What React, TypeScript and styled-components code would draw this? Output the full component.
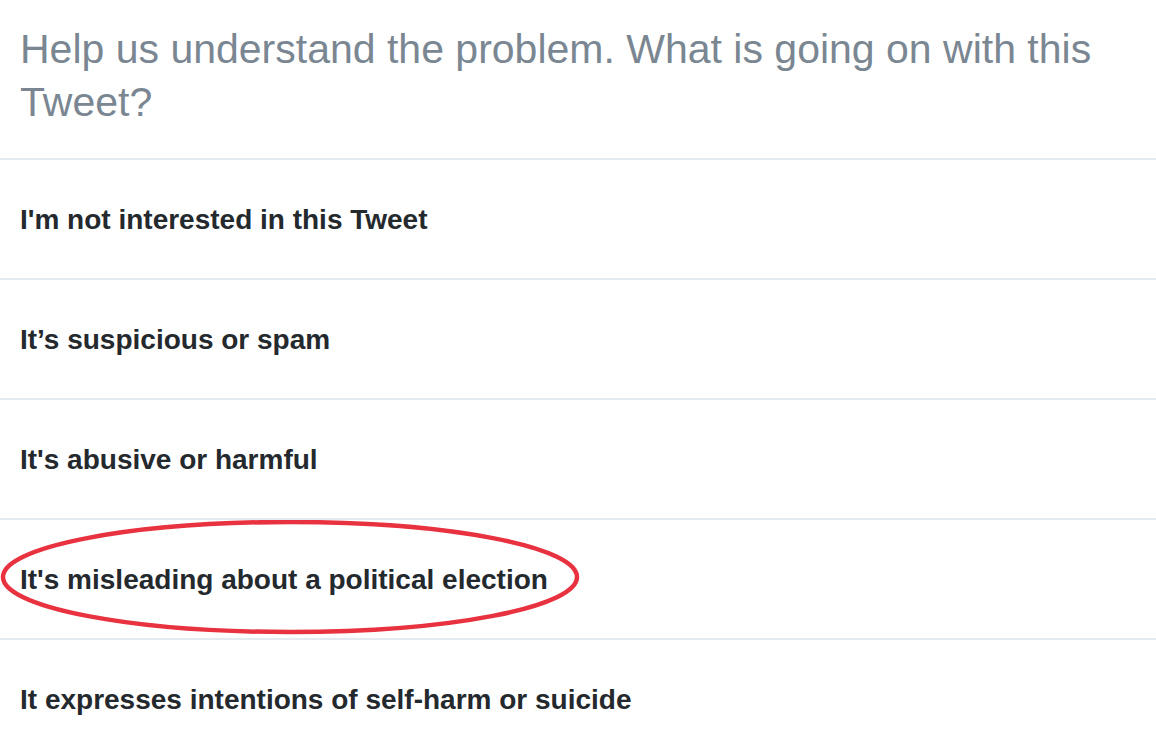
import React from "react";
import styled, { createGlobalStyle } from "styled-components";

const Global = createGlobalStyle`
  html, body { margin: 0; padding: 0; background: #ffffff; }
  body { font-family: "Liberation Sans", Arial, Helvetica, sans-serif; overflow: hidden; }
`;

const Page = styled.div`
  width: 1156px;
  display: flex;
  flex-direction: column;
`;

const Heading = styled.h1`
  margin: 0;
  padding: 23px 20px 29px;
  font-family: "Liberation Sans", Arial, sans-serif;
  font-size: 41px;
  line-height: 53px;
  font-weight: 400;
  color: #7a8792;
  border-bottom: 2px solid #e4eaf0;
`;

const Row = styled.div`
  position: relative;
  height: 118px;
  display: flex;
  align-items: center;
  padding: 0 20px;
  border-bottom: 2px solid #e4eaf0;
`;

const Label = styled.span`
  font-family: "Liberation Sans", Arial, sans-serif;
  font-size: 28px;
  font-weight: 700;
  color: #24292e;
  position: relative;
  top: 1px;
`;

const Circle = styled.svg`
  position: absolute;
  left: 0;
  top: 0;
  width: 582px;
  height: 118px;
  pointer-events: none;
`;

const options = [
  "I'm not interested in this Tweet",
  "It\u2019s suspicious or spam",
  "It's abusive or harmful",
  "It's misleading about a political election",
  "It expresses intentions of self-harm or suicide",
];

export default function App() {
  return (
    <Page>
      <Global />
      <Heading>Help us understand the problem. What is going on with this Tweet?</Heading>
      {options.map((o, i) => (
        <Row key={o}>
          <Label>{o}</Label>
          {i === 3 && (
            <Circle viewBox="0 0 582 118">
              <ellipse cx="290" cy="57" rx="287" ry="55" fill="none" stroke="#e8323f" strokeWidth="4.5" />
            </Circle>
          )}
        </Row>
      ))}
    </Page>
  );
}
